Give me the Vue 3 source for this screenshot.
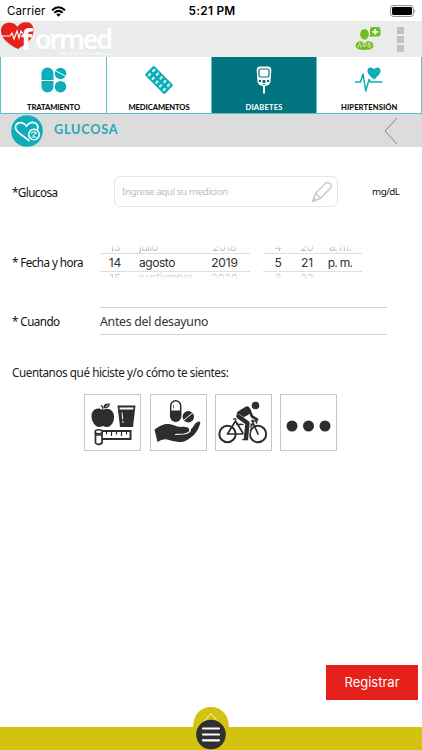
<script setup>
const tabs = [
  { id: 'tratamiento', label: 'TRATAMIENTO' },
  { id: 'medicamentos', label: 'MEDICAMENTOS' },
  { id: 'diabetes', label: 'DIABETES', active: true },
  { id: 'hipertension', label: 'HIPERTENSIÓN' },
]
const dateRows = [
  ['13', 'julio', '2018'],
  ['14', 'agosto', '2019'],
  ['15', 'septiembre', '2020'],
]
const timeRows = [
  ['4', '20', 'a. m.'],
  ['5', '21', 'p. m.'],
  ['6', '22', ''],
]
const rowKind = ['prev', 'current', 'next']
const activities = ['comida', 'medicina', 'ejercicio', 'otros']
</script>

<template>
  <div class="screen">
    <div class="status">
      <div class="carrier">
        <span>Carrier</span>
        <svg width="15" height="11" viewBox="0 0 15 11">
          <g fill="none" stroke="#000" stroke-width="2">
            <path d="M1 4.2Q7.5 -1.8 14 4.2" />
            <path d="M3.3 6.8Q7.5 3 11.7 6.8" />
          </g>
          <path d="M5.2 8.4Q7.5 6.6 9.8 8.4L7.5 10.8Z" />
        </svg>
      </div>
      <span class="clock">5:21 PM</span>
      <svg class="battery" width="27" height="12" viewBox="0 0 27 12">
        <rect x=".6" y=".6" width="22.8" height="10.8" rx="2.6" fill="#fff" stroke="#888" />
        <rect x="2" y="2" width="20" height="8" rx="1.4" />
        <path d="M24.6 4Q26.4 6 24.6 8Z" fill="#888" />
      </svg>
    </div>

    <header class="header">
      <div class="brand">
        <svg class="heart" width="34" height="29" viewBox="0 0 34 29">
          <path d="M18 27C10 23 1 17 1 9C1 3 5 .8 9.500 .8C14 .8 16 3 17.500 5C19 2 22 .3 26 .3C31 .3 33.500 3.500 33.500 8C33.500 17 26 22 18 27Z" fill="#e6211b" />
          <path d="M2 14H10L12 11L14 17L17 9L19 16L21 9L24 13" fill="none" stroke="#fff" stroke-width="1.200" />
        </svg>
        <span class="initial">f</span>
        <div class="words">
          <span class="name">ormed</span>
          <span class="tagline">Manejo de Servicios Médicos</span>
        </div>
      </div>
      <div class="actions">
        <svg width="26" height="26" viewBox="0 0 26 26">
          <g fill="#72bd20">
            <ellipse cx="9.500" cy="8.300" rx="4.300" ry="5.400" />
            <path d="M17 1H23Q25.500 1 25.500 3.500V8Q25.500 10.500 23 10.500H18L14.500 11L15 8V3Q15 1 17 1Z" />
            <path d="M.5 20.500Q.5 15.500 6 15L9.500 17.500L13 15Q18.500 15.500 18.500 20.500Q17 24 9.500 24Q2 24 .5 20.500Z" />
          </g>
          <path d="M20.200 3V8.600M17.400 5.800H23" stroke="#fff" stroke-width="1.700" />
          <path d="M5 16L4.700 18M7.500 17L9.500 21L11.500 17M14 16V18" fill="none" stroke="#ebebeb" stroke-width=".9" />
          <path d="M3 21.500V19.500Q4.500 17.500 6 19.500V21.500" fill="none" stroke="#ebebeb" stroke-width=".9" />
          <circle cx="14.200" cy="19.700" r="1.400" fill="none" stroke="#ebebeb" stroke-width=".9" />
        </svg>
        <div class="more"><i></i><i></i><i></i></div>
      </div>
    </header>

    <nav class="tabs">
      <div v-for="tab in tabs" :key="tab.id" class="tab" :class="[tab.id, { active: tab.active }]">
        <svg v-if="tab.id === 'tratamiento'" width="30" height="30" viewBox="0 0 30 30">
          <g fill="#0eadba">
            <path d="M2.500 15V8.500A6 6 0 0 1 14.500 8.500V15Z" />
            <path d="M2.500 16H14.500V21.500A6 6 0 0 1 2.500 21.500Z" />
            <circle cx="21.500" cy="8.500" r="5.800" /><circle cx="21.500" cy="21.700" r="5.800" />
          </g>
          <path d="M16 5.500L27 11.500" stroke="#fff" />
        </svg>
        <svg v-else-if="tab.id === 'medicamentos'" width="30" height="30" viewBox="0 0 30 30">
          <g transform="translate(15 15) rotate(45)">
            <rect x="-14" y="-6.500" width="28" height="13" rx="1.500" fill="#0eadba" />
            <g fill="#fff">
              <g v-for="n in 5" :key="n" :transform="`translate(${(n - 3) * 5.200} 0)`">
                <ellipse cy="-3" rx="1.300" ry="1.800" /><ellipse cy="3" rx="1.300" ry="1.800" />
              </g>
            </g>
            <path d="M-13 -3H13M-13 3H13" stroke="#0eadba" stroke-width=".6" />
          </g>
        </svg>
        <svg v-else-if="tab.id === 'diabetes'" width="30" height="30" viewBox="0 0 30 30">
          <path d="M11 1.500H19Q22.500 1.500 22.300 6L21.500 17Q20.500 21 15 21Q9.500 21 8.500 17L7.700 6Q7.500 1.500 11 1.500Z" fill="#fff" />
          <rect x="10" y="4" width="10" height="8" rx="1.500" fill="#fff" stroke="#00757f" stroke-width="1.200" />
          <g fill="#00757f"><circle cx="11" cy="16" r="1.200" /><circle cx="15" cy="16.500" r="1.700" /><circle cx="19" cy="16" r="1.200" /></g>
          <path d="M15 21V28.500" stroke="#fff" stroke-width="2" />
          <path d="M13.500 19.500H16.500" stroke="#00757f" stroke-width=".7" />
        </svg>
        <svg v-else width="30" height="30" viewBox="0 0 30 30">
          <path d="M1 17H6.500L9 9L11.800 26L15 14.500L16.500 17H28.500" fill="none" stroke="#0eadba" stroke-width="1.500" stroke-linejoin="round" />
          <path d="M20 14.500C16 11 13.500 9 13.500 5.700C13.500 1.600 18.500 1.500 20 4.500C21.500 1.500 26.500 1.600 26.500 5.700C26.500 9 24 11 20 14.500Z" fill="#0eadba" />
        </svg>
        <span>{{ tab.label }}</span>
      </div>
    </nav>

    <div class="title">
      <svg class="badge" width="32" height="32" viewBox="0 0 32 32">
        <circle cx="16" cy="16" r="15.800" fill="#0eadba" />
        <path d="M18 25.500L8 18C4.500 15 3.500 12 5.300 9.500C7.500 6.500 12.500 7 15.500 11C18.500 7 23.500 6 26 9.500C27.300 11.300 27.200 13 26.500 14.500" fill="none" stroke="#fff" stroke-width="1.700" stroke-linecap="round" />
        <circle cx="23" cy="19.500" r="5.300" fill="#0eadba" stroke="#fff" stroke-width="1.500" />
        <path d="M20 18.500Q23 15 26 18.500M22 21L25 17.500M20.500 22H25.500" fill="none" stroke="#fff" stroke-width="1.100" />
      </svg>
      <h1>GLUCOSA</h1>
      <svg class="back" width="14" height="28" viewBox="0 0 14 28"><path d="M13 1L1 14L13 27" fill="none" stroke="#858585" /></svg>
    </div>

    <main class="form">
      <div class="row glucose">
        <label>*Glucosa</label>
        <div class="field">
          <span>Ingrese aquí su medicion</span>
          <svg width="22" height="22" viewBox="0 0 22 22">
            <g fill="none" stroke="#cacaca" stroke-width="1.500" stroke-linejoin="round">
              <path d="M1.500 20.500L4.500 12.500L14.500 2.300Q16.500 .5 19 2.500Q21.500 5 19.500 7L9.500 17.300Z" />
              <path d="M4.500 12.500L9.500 17.300" />
            </g>
            <path d="M1.500 20.500L3 16L6 19Z" fill="#cacaca" />
          </svg>
        </div>
        <span class="unit">mg/dL</span>
      </div>

      <div class="row when">
        <label>* Fecha y hora</label>
        <div class="picker date">
          <div v-for="(row, r) in dateRows" :key="r" class="slot" :class="rowKind[r]">
            <span v-for="cell in row" :key="cell">{{ cell }}</span>
          </div>
        </div>
        <div class="picker time">
          <div v-for="(row, r) in timeRows" :key="r" class="slot" :class="rowKind[r]">
            <span v-for="cell in row" :key="cell">{{ cell }}</span>
          </div>
        </div>
      </div>

      <div class="row moment">
        <label>* Cuando</label>
        <div class="select">Antes del desayuno</div>
      </div>

      <p class="question">Cuentanos qué hiciste y/o cómo te sientes:</p>

      <div class="activities">
        <div v-for="kind in activities" :key="kind" class="activity">
          <svg v-if="kind === 'comida'" width="55" height="55" viewBox="0 0 55 55">
            <g fill="#2d2d2d">
              <path d="M18 15C12 11 6.500 15 6.500 21C6.500 27 10.500 32 14 32Q16 32 18 31Q20 32 22 32C26 32 29.500 27 29 21C28.500 15 23 12 18 15Z" />
              <path d="M17.500 15Q17.500 12 15.500 10.500L17 10Q18.500 11.500 18.500 15Z" />
              <path d="M18.500 13C18 9 21 8.500 25 8.500C25 12 22 14 18.500 13Z" />
              <path d="M32.500 10.500H50.500L48 32H35Z" />
            </g>
            <path d="M20.500 12L23.500 10" stroke="#fff" stroke-width=".8" />
            <path d="M34.500 12.500H48.500L48.200 14.500H34.700Z" fill="#fff" />
            <path d="M37 17.500L38 28" stroke="#fff" stroke-dasharray="7 1.500" />
            <path d="M17 36H45.500V44H17" fill="none" stroke="#2d2d2d" stroke-width="2" />
            <path d="M21.500 36V39.500M26.500 36V41M31.500 36V39.500M36.500 36V41M41.500 36V39.500" stroke="#2d2d2d" stroke-width="1.200" />
            <path d="M10.500 37V48Q13.500 51 17 48V37" fill="#fff" stroke="#2d2d2d" stroke-width="1.700" />
            <ellipse cx="13.700" cy="36.800" rx="3.500" ry="2" fill="#fff" stroke="#2d2d2d" stroke-width="1.500" />
            <path d="M11 40H16.500" stroke="#2d2d2d" stroke-width="1.500" />
          </svg>
          <svg v-else-if="kind === 'medicina'" width="55" height="55" viewBox="0 0 55 55">
            <rect x="19.700" y="5.700" width="10" height="20.500" rx="5" fill="#fff" stroke="#2d2d2d" stroke-width="1.500" />
            <path d="M19.700 15.500H29.700V21.500A5 5 0 0 1 19.700 21.500Z" fill="#2d2d2d" />
            <path d="M22.500 10V13.500" stroke="#2d2d2d" stroke-width=".7" />
            <circle cx="37.300" cy="21.700" r="5.700" fill="#2d2d2d" /><path d="M32.500 25.500L42 17.500" stroke="#fff" />
            <path d="M3.500 34.500C8 31.500 12 28.500 18 29C23 29.500 25 32.500 32 31.800C38 31.500 39.500 35 37.500 36.500C44 32 43 27 48 26.500Q50 26.500 49 29C47 36 43 41 37 44.500C30 49 24 46.500 18 45Q12 43 6.500 47Z" fill="#2d2d2d" />
            <path d="M24 39.500Q28 39 33 39C38 38.500 40.500 35.500 38.500 33.300" fill="none" stroke="#fff" stroke-width="1.200" />
          </svg>
          <svg v-else-if="kind === 'ejercicio'" width="55" height="55" viewBox="0 0 55 55">
            <g fill="none" stroke="#2d2d2d" stroke-linejoin="round" stroke-linecap="round">
              <circle cx="11.500" cy="39" r="8.200" stroke-width="2" /><circle cx="42" cy="39" r="8.200" stroke-width="2" />
              <path d="M11.500 39L19.500 26L27.500 39H11.500M21 29.500L37 29L27.500 39M36 25.500L42 39M18 24H22M36 26H39Q41 26 40.500 28" stroke-width="1.700" />
              <path d="M24.500 19L31 15" stroke-width="7" />
              <path d="M23.500 21L31 17" stroke-width="6" />
              <path d="M33.500 15.500L36 21.500L41 24.500" stroke-width="2.700" />
              <path d="M23 22.500L31.500 28.500L30 43" stroke="#fff" stroke-width="6" />
              <path d="M22.500 21.500L31.500 28L30 43" stroke-width="4.400" />
              <path d="M27 44.500H31.500" stroke-width="1.600" />
            </g>
            <circle cx="39.500" cy="10.500" r="3.800" fill="#2d2d2d" />
          </svg>
          <svg v-else width="55" height="55" viewBox="0 0 55 55">
            <g fill="#2d2d2d"><circle cx="11" cy="31" r="5.500" /><circle cx="27.500" cy="31" r="5.500" /><circle cx="44" cy="31" r="5.500" /></g>
          </svg>
        </div>
      </div>
    </main>

    <button class="submit">Registrar</button>

    <footer class="footer">
      <svg class="menu" width="36" height="43" viewBox="0 0 36 43">
        <path d="M0 21C0 7 8 0 18 0S36 7 36 21Z" fill="#d3c212" />
        <path d="M11.500 14L18 6.500L24.500 14" fill="none" stroke="#fff6a0" />
        <circle cx="18" cy="27.500" r="14.800" fill="#303030" />
        <path d="M10 21.500H26M10 27.500H26M10 33.300H26" stroke="#fff" stroke-width="2.200" stroke-linecap="round" />
      </svg>
    </footer>
  </div>
</template>

<style>
body { margin: 0; background: #fff; }
</style>

<style scoped>
.screen { width: 422px; height: 750px; display: flex; flex-direction: column; overflow: hidden; background: #fff; color: #222; font-family: "Noto Sans", sans-serif; }
.screen * { box-sizing: border-box; }
svg { display: block; flex: none; }
span, label { white-space: nowrap; }
.status { height: 21px; flex: none; display: grid; grid-template-columns: 1fr auto 1fr; align-items: center; padding: 1px 5px 0 7px; font: 11.500px Inter, sans-serif; color: #000; }
.carrier { display: flex; gap: 6px; align-items: center; letter-spacing: .1px; }
.clock { font-weight: 600; font-size: 11.800px; letter-spacing: .3px; }
.battery { justify-self: end; }
.header { height: 36px; flex: none; background: #ebebeb; display: flex; justify-content: space-between; }
.brand { display: flex; color: #fff; }
.heart { margin-top: 1px; }
.initial { width: 14px; margin-left: -13px; font: bold 29px/36px "Noto Sans", sans-serif; }
.words { display: flex; flex-direction: column; width: 76px; }
.name { font: 600 27px/31px "Noto Sans", sans-serif; height: 31px; padding-top: 2px; letter-spacing: -2.200px; }
.tagline { font-size: 4px; line-height: 4px; align-self: flex-end; letter-spacing: -.1px; }
.actions { display: flex; gap: 16px; padding: 5px 18px 0 0; align-items: flex-start; }
.more { display: flex; flex-direction: column; gap: 2px; padding-top: 1px; }
.more i { width: 7px; height: 7px; background: #c1c1c1; }
.tabs { height: 57px; flex: none; display: grid; grid-template-columns: 106px 105px 105px 104.500px; border: solid #5cc0c9; border-width: 0 1px 1px; }
.tab { display: flex; flex-direction: column; align-items: center; padding-top: 8px; border-right: 1.500px solid #5cc0c9; font: 900 7.600px/10px Lato, sans-serif; letter-spacing: -.1px; color: #111; gap: 6.500px; }
.tab:last-child { border-right: 0; letter-spacing: .1px; }
.tab.active { background: #00757f; color: #fff; font-weight: 700; letter-spacing: .15px; }
.title { height: 33px; flex: none; background: #dcdcdc; display: flex; align-items: center; padding: 0 24px 0 11px; }
h1 { margin: 0 auto 0 11px; font: 700 12.700px/20px Lato, sans-serif; color: #26a9b4; letter-spacing: .75px; padding-bottom: 3px; }
.form { flex: none; height: 518px; padding: 29px 0 0 12px; display: flex; flex-direction: column; }
.row { display: flex; align-items: center; font-size: 11.700px; flex: none; }
.row label { color: #111; flex: none; letter-spacing: -.58px; }
.glucose { height: 31px; }
.glucose label { width: 102px; }
.field { width: 224px; height: 31px; border: 1px solid #e6e6e6; border-radius: 6px; display: flex; align-items: center; justify-content: space-between; padding: 0 4px 0 7px; font-size: 9.800px; letter-spacing: -.42px; color: #bdbdbd; }
.unit { margin-left: 34px; font-size: 9.800px; letter-spacing: -.5px; color: #111; }
.when { height: 34px; margin-top: 38px; }
.when label { width: 88px; padding-bottom: 1px; }
.picker { font-family: Inter, sans-serif; font-size: 12px; letter-spacing: -.15px; color: #303030; }
.date { width: 150px; }
.time { width: 99px; margin-left: 13px; }
.slot { display: grid; height: 8px; align-items: center; overflow: hidden; }
.date .slot { grid-template-columns: 30px 73px 43px; }
.date .slot span:nth-child(2) { padding-left: 9px; letter-spacing: -.45px; }
.date .slot span:nth-child(odd), .time .slot span { text-align: center; }
.time .slot { grid-template-columns: 30px 28px 38px; }
.time .slot span:last-child { letter-spacing: -.7px; }
.slot.current { height: 19px; border: solid #dedede; border-width: 1px 0; }
.slot.prev, .slot.next { font-size: 11px; color: #b5b5b5; line-height: 12px; }
.slot.prev { align-content: end; -webkit-mask-image: linear-gradient(transparent, #000 60%); mask-image: linear-gradient(transparent, #000 60%); }
.slot.next { height: 7px; align-content: start; -webkit-mask-image: linear-gradient(#000 20%, transparent); mask-image: linear-gradient(#000 20%, transparent); }
.moment { height: 28px; margin-top: 28px; }
.moment label { width: 88px; }
.select { width: 287px; height: 28px; border: solid #d2d2d2; border-width: 1px 0; line-height: 27px; font-size: 12.300px; letter-spacing: -.27px; color: #333; }
.question { margin: 28px 0 0; height: 18px; line-height: 18px; font-size: 11.700px; letter-spacing: -.43px; color: #222; white-space: nowrap; }
.activities { display: flex; gap: 8.300px; margin: 13px 0 0 72.300px; }
.activity { width: 57px; height: 57px; border: 1px solid #c6c6c9; flex: none; }
.submit { align-self: flex-end; margin-right: 4px; width: 92px; height: 35px; flex: none; border: 0; padding: 0; background: #e6211b; color: #fff; font: 13px/35px Inter, sans-serif; }
.footer { height: 23px; flex: none; margin-top: 27px; background: #d3c212; display: flex; justify-content: center; align-items: flex-end; }
</style>
